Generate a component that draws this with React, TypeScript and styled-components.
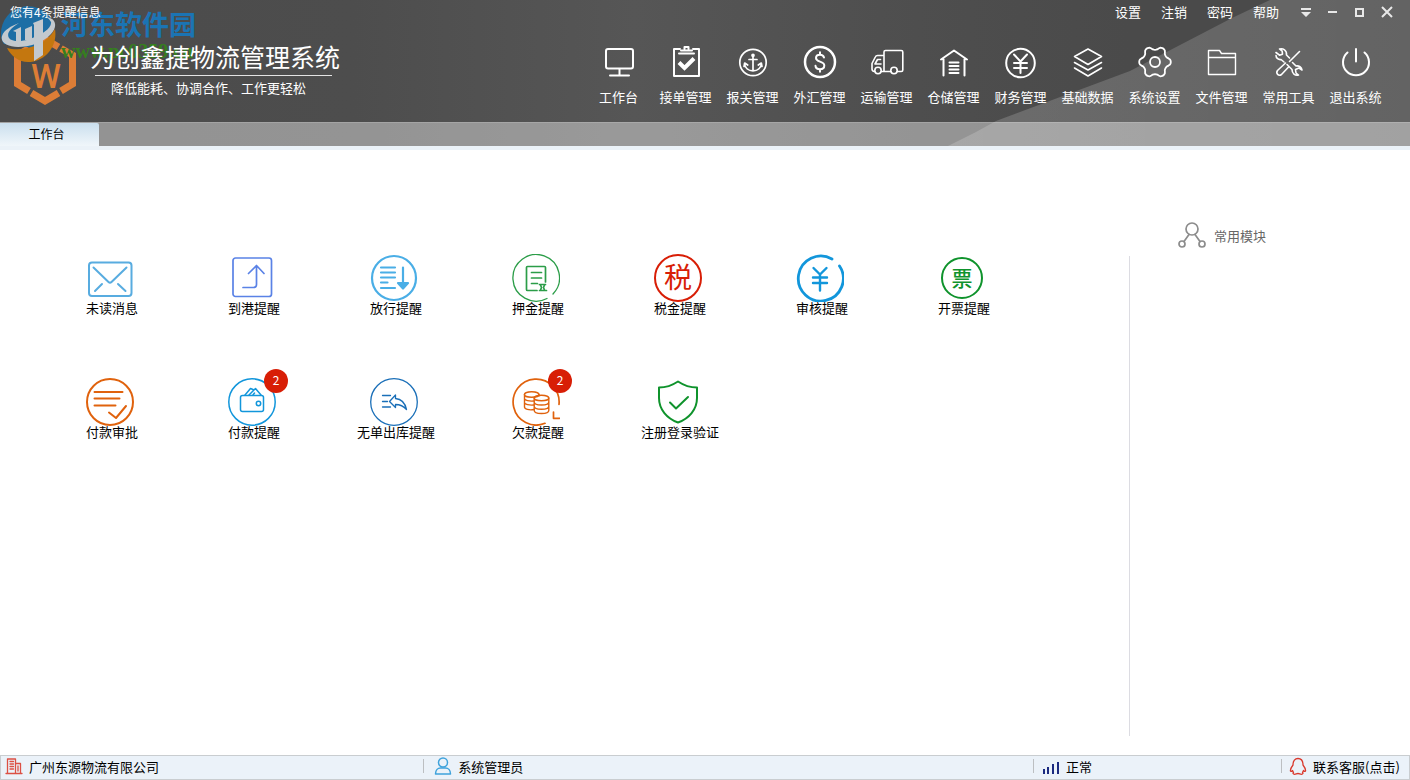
import React from "react";
import styled, { createGlobalStyle } from "styled-components";

const sans = `"Noto Sans CJK SC", "Liberation Sans", sans-serif`;

const GlobalStyle = createGlobalStyle`
  * { box-sizing: border-box; }
  body { margin: 0; background: #fff; }
  body, button { font-family: ${sans}; font-size: 13px; }
  button { border: 0; padding: 0; background: none; color: inherit; cursor: pointer; }
  svg { display: block; }
`;

const Page = styled.div`
  display: flex;
  flex-direction: column;
  min-height: 100vh;
`;

const Header = styled.header`
  position: relative;
  color: #fff;
  background: linear-gradient(90deg, #4b4b4b 0%, #4d4d4d 25%, #565656 45%, #4e4e4e 65%, #4a4a4a 80%, #4a4a4a 100%);
  border-bottom: 4px solid #ebf2f8;
`;

const Sheen = styled.svg`
  position: absolute;
  right: 0;
  top: 0;
`;

const HeaderTop = styled.div`
  position: relative;
  display: flex;
  justify-content: space-between;
  height: 122px;
`;

const Brand = styled.div`
  position: relative;
  width: 350px;
`;

const Notice = styled.p`
  position: relative;
  z-index: 1;
  margin: 0;
  padding: 2px 10px;
  font-size: 12px;
  line-height: 20px;
`;

const BrandRow = styled.div`
  display: flex;
  gap: 13px;
  padding: 8px 0 0 13px;
`;

const BrandText = styled.div`
  position: relative;
  z-index: 1;
  padding-top: 6px;
`;

const Title = styled.h1`
  margin: 0;
  font-size: 25px;
  font-weight: 400;
  line-height: 37px;
  white-space: nowrap;
`;

const Tagline = styled.p`
  margin: 0 8px 0 5px;
  padding: 2px 0 0 16px;
  border-top: 1px solid #e4e4e4;
  font-size: 13px;
  line-height: 20px;
  white-space: nowrap;
`;

const SiteMark = styled.div`
  position: absolute;
  left: 0;
  top: 6px;
  display: flex;
  gap: 4px;
`;

const SiteName = styled.div`
  color: #1b74b4;
  font-size: 27px;
  font-weight: 700;
  line-height: 35px;
  white-space: nowrap;
`;

const SiteUrl = styled.div`
  color: #357f1e;
  font: 700 20px/20px "Liberation Serif", serif;
`;

const HeaderSide = styled.div`
  display: flex;
  flex-direction: column;
  align-items: flex-end;
`;

const SystemMenu = styled.div`
  display: flex;
  height: 44px;
  padding-right: 10px;
`;

const MenuButton = styled.button`
  width: 46px;
  height: 24px;
  line-height: 24px;
`;

const WindowButtons = styled.div`
  display: flex;
  padding-left: 3px;
`;

const WindowButton = styled.button`
  display: grid;
  place-items: center;
  width: 27px;
  height: 24px;
`;

const Nav = styled.nav`
  display: flex;
  padding-right: 21px;
`;

const NavButton = styled.button`
  display: flex;
  flex-direction: column;
  align-items: center;
  gap: 7px;
  width: 67px;
  line-height: 20px;
  white-space: nowrap;
`;

const TabStrip = styled.div`
  position: relative;
  display: flex;
  height: 24px;
  background: rgba(255, 255, 255, 0.4);
  border-top: 1px solid rgba(255, 255, 255, 0.15);
`;

const Tab = styled.button`
  width: 99px;
  padding: 0 6px 2px 0;
  color: #000;
  font-size: 12px;
  line-height: 20px;
  border-radius: 0 2px 0 0;
  background: linear-gradient(#cadfee, #f0f6fa);
`;

const Body = styled.div`
  display: flex;
  flex: 1;
`;

const Tiles = styled.main`
  flex: 1;
  display: grid;
  grid-template-columns: repeat(auto-fill, 142px);
  align-content: start;
  row-gap: 62px;
  padding: 104px 0 62px 41px;
`;

const Tile = styled.button`
  display: flex;
  flex-direction: column;
  align-items: center;
  height: 62px;
  color: #000;
  line-height: 12px;
`;

const TileIcon = styled.span`
  position: relative;
  margin-right: 4px;
`;

const Badge = styled.span`
  position: absolute;
  top: -9px;
  right: -12px;
  width: 24px;
  height: 24px;
  border-radius: 50%;
  background: #d81e06;
  color: #fff;
  font-size: 12px;
  line-height: 22px;
  text-align: center;
`;

const Side = styled.aside`
  display: flex;
  flex-direction: column;
  width: 281px;
  padding: 70px 0 19px;
`;

const SideTitle = styled.h2`
  display: flex;
  align-items: center;
  gap: 7px;
  height: 30px;
  margin: 0 0 6px;
  padding-left: 48px;
  color: #666;
  font-size: 13px;
  font-weight: 400;
`;

const SideList = styled.div`
  flex: 1;
  border-left: 1px solid #dcdce2;
`;

const StatusBar = styled.footer`
  display: grid;
  grid-template-columns: 423fr 611fr 248px 128px;
  align-items: center;
  height: 25px;
  padding-bottom: 3px;
  border: 1px solid #c9cdd0;
  background: #ebf2f9;
  color: #000;
`;

const StatusItem = styled.div<{ $first?: boolean; $pad: number }>`
  display: flex;
  align-items: center;
  gap: 6px;
  height: 14px;
  padding-left: ${(p) => p.$pad}px;
  border-left: ${(p) => (p.$first ? "0" : "1px solid #bcbfc2")};
  white-space: nowrap;
`;

const SupportLink = styled.a`
  color: #000;
  text-decoration: none;
`;

function Line({ size, color = "#fff", width = 2, children }: { size: number; color?: string; width?: number; children: React.ReactNode }) {
  return (
    <svg width={size} height={size} viewBox={`0 0 ${size} ${size}`} fill="none" stroke={color} strokeWidth={width} strokeLinecap="round" strokeLinejoin="round" aria-hidden="true">
      {children}
    </svg>
  );
}

/* Closed outline of a six-toothed gear centred on (18, 18). */
const gearPath =
  Array.from({ length: 72 }, (_, i) => {
    const a = (i * Math.PI) / 36;
    const wave = Math.cos(6 * a);
    const r = 14 + 1.8 * Math.sign(wave) * Math.pow(Math.abs(wave), 0.6);
    return `${i ? "L" : "M"}${(18 + r * Math.cos(a)).toFixed(1)} ${(18 + r * Math.sin(a)).toFixed(1)}`;
  }).join("") + "Z";

const navItems: { label: string; width?: number; icon: React.ReactNode }[] = [
  { label: "工作台", icon: <><rect x="5" y="5" width="27" height="19.500" rx="2" /><path d="M18.500 25v6M9 31.500h19" /></> },
  { label: "接单管理", icon: <><path d="M12 5H6v27h25V5h-6" /><path d="M13 6.500h11M11 9.500h15M16.500 5V3h4v2" strokeWidth="2" /><path d="M11 18.500l5.500 5.500L26 14.500" strokeWidth="4" strokeLinecap="butt" strokeLinejoin="miter" /></> },
  { label: "报关管理", width: 1.7, icon: <><circle cx="18" cy="18.500" r="13.200" /><path d="M18 12v15M14 15.500h8M9.500 19.500c.5 4.500 4 7.300 8.500 7.300s8-2.800 8.500-7.300M9 22.500l.7-3.500 3 2M27 22.500l-.7-3.500-3 2" /><circle cx="18" cy="11.300" r="1" /></> },
  { label: "外汇管理", icon: <><circle cx="18" cy="18" r="15" strokeWidth="2.500" /><path d="M22 13.500c-.5-2-2-2.800-4-2.800-2.300 0-4 1.200-4 3.300 0 4.500 8.300 2.700 8.300 7.500 0 2.400-1.900 3.700-4.300 3.700s-4.300-1.200-4.500-3.400M18 8.300v2.400M18 25.200v2.500" /></> },
  { label: "运输管理", width: 1.6, icon: <><path d="M12.500 27.500h9.300M28.300 27.500h4c1 0 1.500-.5 1.500-1.500V8c0-1-.5-1.500-1.500-1.500H16.500c-1 0-1.500.5-1.500 1.500v19M15 11.500H8.500c-1 0-1.800.6-2.200 1.500L3 19.500V25c0 1.500.7 2.300 2.500 2.500M11.500 15.500h-3L6 20h6" /><circle cx="9" cy="26.500" r="3.200" /><circle cx="25" cy="26.500" r="3.200" /></> },
  { label: "仓储管理", icon: <path d="M5 15.500L18 6.500l13 9M7.500 15v16.500M28.500 15v16.500M13.500 18.500h9M13.500 22h9M13.500 25.500h9M13.500 29h9" /> },
  { label: "财务管理", icon: <><circle cx="17.500" cy="19" r="14.300" /><path d="M11 10.500l6.500 7 6.500-7M17.500 17.500V29M11 19h13M11 24h13" /></> },
  { label: "基础数据", width: 1.6, icon: <path d="M4.500 12.500L18 5l13.500 7.500L18 20.500zM4.500 18.500L18 26l13.500-7.500M4.500 24L18 32l13.500-8" /> },
  { label: "系统设置", width: 1.8, icon: <><path d={gearPath} /><circle cx="18" cy="18" r="5" /></> },
  { label: "文件管理", width: 1.4, icon: <path d="M4.500 30.500v-24h11l2 3h14v21zM4.500 13.500h27" /> },
  { label: "常用工具", width: 1.6, icon: <path d="M28.500 7.500L18.500 17.500M16 20.500l2 2-7.500 8c-3 2-6-1-4-4l8-7.500M5 8.500l3.500 2.700 3-1-.3-3L8.500 5c3.500-1 7.500 1.200 7 6l3 3M10 15.500c-2.500.5-5-1.500-5-4M10 15.500l3 2.500M31 26l-3-2-3.500 1.500.5 3.500 2.500 2c-3.500.8-6.500-1.500-6.500-5.500l-3-3M31 26c-.3-3-3-4.500-6-4l-3.500-3.500" /> },
  { label: "退出系统", icon: <path d="M9.500 8.500a13 13 0 1 0 17 0M18 5v12.500" /> },
];

type TileData = { label: string; color: string; width: number; badge?: number; icon: React.ReactNode };

const tiles: TileData[] = [
  { label: "未读消息", color: "#58ace0", width: 2, icon: <><rect x="3" y="8.500" width="42.500" height="33.500" rx="3" /><path d="M7.500 13.500L22.500 28q1.500 1.500 3 0L40.500 13.500M9 37l7-7M32 30l7.500 7" /></> },
  { label: "到港提醒", color: "#5a82e6", width: 1.7, icon: <><rect x="5" y="4" width="38.500" height="38.500" rx="2.500" /><path d="M15 33.500h10.500c2 0 3-1 3-3V11.500M20.500 19.500l8-8 7.500 8" /></> },
  { label: "放行提醒", color: "#4aaee6", width: 2.2, icon: <><circle cx="24" cy="24" r="22" /><path d="M11 13.500h14M11 18.500h14M11 23.500h14M11 28.500h6.500M11 34h14M33 13.500V32" /><path d="M28 29h10l-5 5.500z" fill="#4aaee6" /></> },
  { label: "押金提醒", color: "#2b9d48", width: 1.3, icon: <><path d="M35 44.500A23.300 23.300 0 1 1 41 40" /><path d="M25 36.500H15.500q-1 0-1-1v-22q0-1 1-1h17q1 0 1 1V28M19.500 18.500h10M19.500 24h10M19.500 29.500h6" strokeWidth="1.700" /><path d="M27.500 30.500h6M28.500 31l1 2.500-1 2.500M32.500 31l-1 2.500 1 2.500M27.500 36.500h7" strokeWidth="1.700" /></> },
  { label: "税金提醒", color: "#d81e06", width: 2, icon: <><circle cx="24" cy="24" r="23" /><text x="24" y="34" textAnchor="middle" fontSize="28" fill="#d81e06" stroke="none">税</text></> },
  { label: "审核提醒", color: "#1296db", width: 2.8, icon: <><path d="M36 5A22.500 22.500 0 1 0 43.500 12" /><path d="M17.500 14l6.500 6.500 6.500-6.500M24 20.500V36.500M17 23.500h14M17 29h14" strokeWidth="2.400" /></> },
  { label: "开票提醒", color: "#0f932c", width: 2, icon: <><circle cx="24" cy="24" r="20" /><text x="24" y="32" textAnchor="middle" fontSize="21" fontWeight="500" fill="#0f932c" stroke="none">票</text></> },
  { label: "付款审批", color: "#e0620d", width: 2, icon: <><circle cx="24" cy="24" r="23" /><path d="M8.500 14h28M8.500 20.500h25M8.500 27.500h21M23 34.500l7 5.500 10-12" /></> },
  { label: "付款提醒", color: "#1296db", width: 1.5, badge: 2, icon: <><circle cx="24" cy="24" r="23.200" /><rect x="12.500" y="17.500" width="23" height="16" rx="2" /><circle cx="30.500" cy="25.500" r="2.200" /><path d="M17 17l5.500-6.500 2.500 1M21 17l6.500-6.500L33 17M25 17l1.500-2" /></> },
  { label: "无单出库提醒", color: "#1a6fb8", width: 1.3, icon: <><circle cx="24" cy="24" r="23.300" /><path d="M12.500 17.500h8M12.500 23.500h5M12.500 29h8M19.500 23.500l6-6.500v3.500c5.500.5 9.500 4 11 11-3-3.500-6.500-5-11-5v3z" /></> },
  { label: "欠款提醒", color: "#e0620d", width: 1.7, badge: 2, icon: <><path d="M33 45.300A23 23 0 1 1 47 26.500" /><path d="M41.500 34v6.300H47.500" /><g strokeWidth="1.400"><path d="M22 31.500c-5 1-9.500-.5-9.500-2.500V16.500M27 16.500V18M12.500 20.500c0 2 5 3 9.500 2.500M12.500 24.500c0 2 5 3 9.500 2.500" /><ellipse cx="19.700" cy="16.500" rx="7.300" ry="2.800" /><ellipse cx="29.500" cy="20" rx="7.300" ry="2.800" /><path d="M22.200 20v12.500c0 4 14.600 4 14.600 0V20M22.200 24c0 4 14.600 4 14.600 0M22.200 28.200c0 4 14.600 4 14.600 0" /></g></> },
  { label: "注册登录验证", color: "#0f932c", width: 2, icon: <path d="M24 3.500C18 7.500 11.500 9.500 5 9.500V20c0 11.500 8 20.500 19 24.500 11-4 19-13 19-24.500V9.500C36.500 9.500 30 7.500 24 3.500zM16 24.500l6 6L34 19" /> },
];

function CompanyLogo() {
  return (
    <svg width="64" height="76" viewBox="0 0 64 76" aria-hidden="true">
      <g fill="none" stroke="#dc7d36" strokeWidth="7">
        <path d="M16 16.500L4.500 23v29l11.500 7M18.500 61L32 69l13.500-8M48 59l11.500-7V23L48 16.500M45.500 15L32 7 18.500 15" />
      </g>
      <text x="33" y="56" textAnchor="middle" fontFamily="Roboto" fontWeight="500" fontSize="34" fill="#dc7d36">W</text>
    </svg>
  );
}

function SiteLogo() {
  return (
    <svg width="57" height="58" viewBox="0 0 57 58" aria-hidden="true">
      <path d="M1 28a27 27 0 0 1 53-8L34 42 4 38q-3-4-3-10z" fill="#1d6ea5" />
      <path d="M7 42c14 4 38-1 48-19 3 17-10 33-27 33-9 0-17-6-21-14z" fill="#c4770f" />
      <path d="M46 11c10 1 12 9 5 17-8 9-22 13-33 13C8 41 0 37 2 30c2-6 9-10 17-13-8 5-13 10-10 15 3 4 12 4 21 1 12-4 22-11 21-17q-1-3-5-5z" fill="#c3c9ce" />
      <path d="M13 25l8-4v18h-5V26zM25 23l7-3v14h-7zM33 17l10-4v36l-9 6V19z" fill="#c3c9ce" />
    </svg>
  );
}

export default function App() {
  return (
    <Page>
      <GlobalStyle />
      <Header>
        <Sheen width="462" height="146" viewBox="0 0 462 146" aria-hidden="true">
          <defs>
            <linearGradient id="sheen" x1="0" y1="0" x2="1" y2="0">
              <stop offset="0" stopColor="#fff" stopOpacity="0.18" />
              <stop offset="1" stopColor="#fff" stopOpacity="0.14" />
            </linearGradient>
          </defs>
          <path d="M0 146l28-14 20-11L182 71 284 18 322 0h140v146z" fill="url(#sheen)" />
        </Sheen>
        <HeaderTop>
          <Brand>
            <Notice>您有4条提醒信息</Notice>
            <BrandRow>
              <CompanyLogo />
              <BrandText>
                <Title>为创鑫捷物流管理系统</Title>
                <Tagline>降低能耗、协调合作、工作更轻松</Tagline>
              </BrandText>
            </BrandRow>
            <SiteMark>
              <SiteLogo />
              <div>
                <SiteName>河东软件园</SiteName>
                <SiteUrl>www.pc0359.cn</SiteUrl>
              </div>
            </SiteMark>
          </Brand>
          <HeaderSide>
            <SystemMenu>
              {["设置", "注销", "密码", "帮助"].map((item) => (
                <MenuButton key={item} type="button">{item}</MenuButton>
              ))}
              <WindowButtons>
                <WindowButton type="button" aria-label="菜单">
                  <svg width="10" height="9" fill="#e8e8e8"><path d="M0 0h10v2H0zM0 4h10L5 9z" /></svg>
                </WindowButton>
                <WindowButton type="button" aria-label="最小化">
                  <svg width="9" height="2" fill="#e8e8e8"><path d="M0 0h9v2H0z" /></svg>
                </WindowButton>
                <WindowButton type="button" aria-label="最大化">
                  <svg width="9" height="9" fill="none" stroke="#e8e8e8" strokeWidth="2"><path d="M1 1h7v7H1z" /></svg>
                </WindowButton>
                <WindowButton type="button" aria-label="关闭">
                  <svg width="12" height="12" fill="none" stroke="#e8e8e8" strokeWidth="2"><path d="M1 1l10 10M11 1L1 11" /></svg>
                </WindowButton>
              </WindowButtons>
            </SystemMenu>
            <Nav>
              {navItems.map((item) => (
                <NavButton key={item.label} type="button">
                  <Line size={36} width={item.width ?? 2}>{item.icon}</Line>
                  {item.label}
                </NavButton>
              ))}
            </Nav>
          </HeaderSide>
        </HeaderTop>
        <TabStrip>
          <Tab type="button">工作台</Tab>
        </TabStrip>
      </Header>

      <Body>
        <Tiles>
          {tiles.map((tile) => (
            <Tile key={tile.label} type="button">
              <TileIcon>
                <Line size={48} color={tile.color} width={tile.width}>{tile.icon}</Line>
                {tile.badge && <Badge>{tile.badge}</Badge>}
              </TileIcon>
              {tile.label}
            </Tile>
          ))}
        </Tiles>
        <Side>
          <SideTitle>
            <Line size={30} color="#8c8c8c" width={1.7}>
              <circle cx="15" cy="9" r="6" />
              <circle cx="5" cy="24" r="3" />
              <circle cx="25" cy="24" r="3" />
              <path d="M12 14.500L7 21.500M18 14.500l5 7" />
            </Line>
            常用模块
          </SideTitle>
          <SideList />
        </Side>
      </Body>

      <StatusBar>
        <StatusItem $first $pad={4}>
          <Line size={18} color="#dc5044" width={1.3}>
            <path d="M1 16.500h16M2.500 16V2h8v14M10.500 6.500h5V16M5 4.500h3.500M5 7h3.500M5 9.500h3.500M5 12h3.500M13 9v5" />
          </Line>
          广州东源物流有限公司
        </StatusItem>
        <StatusItem $pad={10}>
          <Line size={18} color="#3fa3dc" width={1.5}>
            <circle cx="9" cy="5.500" r="4.500" />
            <path d="M1.500 17c0-4 2.500-6 5-6h5c2.500 0 5 2 5 6z" />
          </Line>
          系统管理员
        </StatusItem>
        <StatusItem $pad={8}>
          <svg width="18" height="18" fill="#1b2a80" aria-hidden="true">
            <path d="M1 12h2v5H1zM5 10h2v7H5zM10 7h2v10h-2zM15 5h2v12h-2z" />
          </svg>
          正常
        </StatusItem>
        <StatusItem $pad={7}>
          <Line size={18} color="#d9382c" width={1.3}>
            <path d="M4 8c0-4 2-6.500 5-6.500S14 4 14 8c1.500 2 3 4 2.500 6-.5 1-1.500 0-2-.5-.3 1-.8 1.500-1 2 .8.500.5 1.800-1 1.800-1.500 0-2-.8-3.500-.8s-2 .8-3.500.8c-1.500 0-1.800-1.300-1-1.800-.2-.5-.7-1-1-2-.5.500-1.500 1.500-2 .5C1 12 2.500 10 4 8z" />
          </Line>
          <SupportLink href="#support">联系客服(点击)</SupportLink>
        </StatusItem>
      </StatusBar>
    </Page>
  );
}
